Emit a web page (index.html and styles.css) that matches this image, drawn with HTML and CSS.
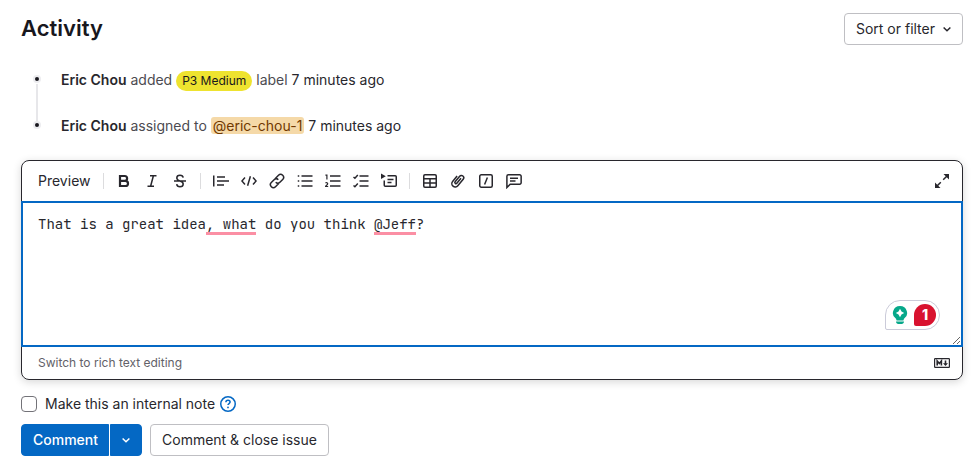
FILE: index.html
```html
<!DOCTYPE html>
<html lang="en">
<head>
<meta charset="utf-8">
<title>Activity</title>
<link rel="stylesheet" href="styles.css">
</head>
<body>
<main class="activity">
  <header class="activity-header">
    <h2 class="title">Activity</h2>
    <button class="btn sort" type="button">Sort or filter
      <svg class="chevron" viewBox="0 0 16 16" aria-hidden="true"><path d="M3.500 6 8 10.300 12.500 6"/></svg>
    </button>
  </header>

  <ul class="timeline">
    <li class="note"><span class="dot"></span><p class="note-text"><a class="author" href="#">Eric Chou</a> added <a class="label" href="#">P3 Medium</a> label <a class="time" href="#">7 minutes ago</a></p></li>
    <li class="note"><span class="dot"></span><p class="note-text"><a class="author" href="#">Eric Chou</a> assigned to <a class="mention" href="#">@eric-chou-1</a> <a class="time" href="#">7 minutes ago</a></p></li>
  </ul>

  <form class="comment-form">
    <div class="editor">
      <div class="toolbar">
        <button class="preview" type="button">Preview</button>
        <span class="divider"></span>
        <div class="tools">
          <button class="tool" type="button" aria-label="Bold"><svg viewBox="0 0 16 16"><path class="thick" d="M4 3h4.700a2.400 2.400 0 0 1 0 4.800H4zM4 7.800h5.400a2.600 2.600 0 0 1 0 5.200H4z"/></svg></button>
          <button class="tool" type="button" aria-label="Italic"><svg viewBox="0 0 16 16"><path d="M6 2.750h6.500M3.500 13.250H10M9.400 2.750l-2.800 10.500"/></svg></button>
          <button class="tool" type="button" aria-label="Strikethrough"><svg viewBox="0 0 16 16"><path d="M2 8h12M11.200 4.700C11 3.300 9.700 2.200 8 2.200S4.800 3.300 4.800 4.900c0 1.800 1.600 2.400 3.200 3.100 1.700.6 3.200 1.200 3.200 3 0 1.700-1.400 2.800-3.200 2.800s-3.100-1.100-3.300-2.600"/></svg></button>
        </div>
        <span class="divider"></span>
        <div class="tools">
          <button class="tool" type="button" aria-label="Quote"><svg viewBox="0 0 16 16"><path d="M.75 2.500v11M4 4h8M4 8h12M4 12h7"/></svg></button>
          <button class="tool" type="button" aria-label="Code"><svg viewBox="0 0 16 16"><path d="M4 4.500.9 8 4 11.500M12 4.500 15.100 8 12 11.500M9.400 3.200l-2.800 9.600"/></svg></button>
          <button class="tool" type="button" aria-label="Link"><svg viewBox="0 0 16 16"><path d="M6.300 5.500 9.500 2.300a2.970 2.970 0 0 1 4.200 4.200l-2.800 2.800a2.970 2.970 0 0 1-4.200 0M9.700 10.500l-3.200 3.200a2.970 2.970 0 0 1-4.200-4.200l2.800-2.800a2.970 2.970 0 0 1 4.200 0"/></svg></button>
          <button class="tool" type="button" aria-label="Bullet list"><svg viewBox="0 0 16 16"><path d="M4.500 3h11M4.500 8h11M4.500 13h11M.75 3h1.500M.75 8h1.500M.75 13h1.500"/></svg></button>
          <button class="tool" type="button" aria-label="Numbered list"><svg viewBox="0 0 16 16"><path d="M5 3h10.500M5 8h10.500M5 13h10.500"/><path class="thin" d="M.4 2.200h1.500V6.500M.5 10.200c.8-.9 2.300-.5 2.200.6-.1 1-1.700 1.700-2.200 2.700h2.700"/></svg></button>
          <button class="tool" type="button" aria-label="Checklist"><svg viewBox="0 0 16 16"><path d="M6.500 3h9M6.500 8h9M6.500 13h9M.5 4l1.400 1.200L4.800 2M.5 12.500l1.400 1.200 2.900-3.200"/></svg></button>
          <button class="tool" type="button" aria-label="Collapsible section"><svg viewBox="0 0 16 16"><path d="M6.500 2.750h7.750a1 1 0 0 1 1 1v8.500a1 1 0 0 1-1 1h-10a1 1 0 0 1-1-1V7.500M6.500 6.500h6M6.500 9.500h4"/><path class="fill" d="M0 .6l4.800 2.700L0 6z"/></svg></button>
        </div>
        <span class="divider"></span>
        <div class="tools">
          <button class="tool" type="button" aria-label="Table"><svg viewBox="0 0 16 16"><rect x="1.750" y="1.750" width="12.500" height="12.500" rx="1.200"/><path d="M2 5.750h12M2 10h12M8 5.750V14"/></svg></button>
          <button class="tool" type="button" aria-label="Attach a file"><svg viewBox="0 0 16 16"><path d="M11 5.200 6.800 10.200a1.100 1.100 0 0 1-1.700-1.400l4.600-5.500a2.250 2.250 0 0 1 3.500 2.900l-5.400 6.500a3.350 3.350 0 0 1-5.200-4.300l4.500-5.400"/></svg></button>
          <button class="tool" type="button" aria-label="Quick action"><svg viewBox="0 0 16 16"><rect x="1.750" y="1.750" width="12.500" height="12.500" rx="1.500"/><path d="M9.400 4.500l-2.800 7"/></svg></button>
          <button class="tool" type="button" aria-label="Insert comment template"><svg viewBox="0 0 16 16"><path d="M.9 14.500V3.250a1.500 1.500 0 0 1 1.500-1.500h11.250a1.500 1.500 0 0 1 1.500 1.500v6.500a1.500 1.500 0 0 1-1.500 1.500H4.200zM4 5.250h8M4 8h5.500"/></svg></button>
        </div>
        <button class="tool expand" type="button" aria-label="Full screen"><svg viewBox="0 0 16 16"><path d="M9.200 6.800 13 3M6.800 9.200 3 13"/><path class="fill" d="M9.500 1h5.500v5.500zM1 9.500V15h5.500z"/></svg></button>
      </div>

      <div class="writing">
        <textarea class="field" aria-label="Comment" spellcheck="false">That is a great idea, what do you think @Jeff?</textarea>
        <div class="marks" aria-hidden="true"><span class="mark mark-what"></span><span class="mark mark-name"></span></div>
        <button class="assistant" type="button" aria-label="Writing suggestions">
          <svg class="bulb" viewBox="0 0 16 20"><path class="green" d="M8 1a7 7 0 0 1 4 12.800l-.6 1.600H4.600L4 13.800A7 7 0 0 1 8 1zM4 16.600h8c0 1.300-1 2.400-2.300 2.400H6.300C5 19 4 17.900 4 16.600z"/><path class="white" d="M8 3.800l1.500 2.700L12.200 8 9.500 9.500 8 12.200 6.500 9.500 3.800 8l2.700-1.500z"/></svg>
          <span class="count">1</span>
        </button>
      </div>

      <div class="editor-footer">
        <button class="switch" type="button">Switch to rich text editing</button>
        <a class="markdown" href="#" aria-label="Markdown is supported"><svg viewBox="0 0 16 16"><rect class="thin" x=".6" y="3.600" width="14.800" height="8.800" rx=".6"/><path class="down" d="M3.200 10.500V6l2.100 2.500L7.400 6v4.500M11.500 5.500v4"/><path class="fill" d="M9 8.200h5L11.500 11z"/></svg></a>
      </div>
    </div>

    <div class="internal">
      <input class="checkbox" type="checkbox" id="internal-note">
      <label for="internal-note">Make this an internal note</label>
      <a class="help" href="#" aria-label="About internal notes"><svg viewBox="0 0 16 16"><circle cx="8" cy="8" r="7.250"/><path d="M5.900 6.200c0-1.200.9-2 2.100-2s2.100.8 2.100 1.900c0 1.400-2.100 1.500-2.100 3"/><circle class="fill" cx="8" cy="11.400" r=".9"/></svg></a>
    </div>

    <div class="actions">
      <div class="split">
        <button class="btn primary" type="button">Comment</button>
        <button class="btn primary toggle" type="button" aria-label="More comment options"><svg class="chevron" viewBox="0 0 16 16"><path d="M3.500 6 8 10.300 12.500 6"/></svg></button>
      </div>
      <button class="btn" type="button">Comment &amp; close issue</button>
    </div>
  </form>
</main>
</body>
</html>
```
FILE: styles.css
```css
* { box-sizing: border-box; }

body {
  margin: 0;
  background: #fff;
  color: #28272d;
  font: 14px/20px Inter, "Noto Sans", sans-serif;
}

button { font: inherit; color: inherit; cursor: pointer; }
a { color: inherit; text-decoration: none; }

svg {
  display: block;
  width: 16px;
  height: 16px;
  fill: none;
  stroke: currentColor;
  stroke-width: 1.5;
}
.thick { stroke-width: 2.2; }
.thin { stroke-width: 1.2; }
.fill { fill: currentColor; stroke: none; }

.activity { padding: 13px 17px 20px 21px; }

.activity-header {
  display: flex;
  align-items: flex-start;
  justify-content: space-between;
}
.title {
  margin: 0;
  color: #18171d;
  font-size: 22px;
  font-weight: 600;
  line-height: 30px;
}

.btn {
  display: flex;
  align-items: center;
  height: 32px;
  padding: 0 11px;
  border: 1px solid #bfbfc3;
  border-radius: 4px;
  background: #fff;
}
.sort { padding-right: 9px; }
.chevron { width: 12px; height: 12px; margin-left: 6px; stroke-width: 2; }

.timeline {
  position: relative;
  display: grid;
  gap: 25px;
  margin: 25px 0 24px;
  padding: 0;
  list-style: none;
}
.timeline::before {
  content: "";
  position: absolute;
  top: 14px;
  bottom: 14px;
  left: 15px;
  width: 2px;
  background: #e7e7ea;
}
.note { display: flex; align-items: flex-start; gap: 20px; padding-left: 12px; }
.dot {
  position: relative;
  width: 8px;
  height: 8px;
  margin-top: 5px;
  border: 2px solid #ececef;
  border-radius: 50%;
  background: #18171d;
}
.note-text { margin: 0; color: #4c4b51; }
.author { color: #28272d; font-weight: 600; }
.time { color: #28272d; }
.label {
  display: inline-block;
  padding: 0 6px;
  border-radius: 10px;
  background: #eee32f;
  color: #18171d;
  font-size: 12px;
}
.mention {
  padding: 0 2px;
  border-radius: 3px;
  background: #f5d9a8;
  color: #703800;
}

.editor {
  border: 1px solid #28272d;
  border-radius: 8px;
  box-shadow: 0 2px 8px #00000029;
}
.toolbar {
  display: flex;
  align-items: center;
  gap: 8px;
  height: 40px;
  padding: 0 8px 0 16px;
}
.preview { margin-right: 4px; padding: 0; border: 0; background: none; }
.divider { width: 1px; height: 16px; background: #dcdcde; }
.tools { display: flex; gap: 4px; }
.tool {
  display: grid;
  place-items: center;
  width: 24px;
  height: 24px;
  padding: 0;
  border: 0;
  background: none;
}
.expand { margin-left: auto; }

.writing { position: relative; margin: 0 -1px; }
.field, .marks { font: 14px/20px "JetBrains Mono", "DejaVu Sans Mono", monospace; }
.field {
  display: block;
  width: 100%;
  height: 146px;
  padding: 11px 15px;
  border: 2px solid #0468c4;
  outline: 0;
  background: #fff;
  color: #28272d;
  resize: vertical;
}
.marks {
  position: absolute;
  top: 31px;
  left: 17px;
  height: 3px;
  pointer-events: none;
}
.mark { position: absolute; height: 3px; background: #fb8fa4; }
.mark-what { left: 20ch; width: 6ch; }
.mark-name { left: 40ch; width: 5ch; }

.assistant {
  position: absolute;
  right: 23px;
  bottom: 17px;
  display: flex;
  align-items: center;
  gap: 6px;
  height: 30px;
  padding: 0 3px 0 6px;
  border: 1px solid #cbcbd9;
  border-radius: 15px 15px 15px 2px;
  background: #fff;
}
.bulb { height: 20px; stroke: none; }
.green { fill: #06a88a; }
.white { fill: #fff; }
.count {
  width: 22px;
  border-radius: 11px 11px 11px 2px;
  background: #d8122f;
  color: #fff;
  font-weight: 800;
  line-height: 22px;
}

.editor-footer {
  display: flex;
  align-items: center;
  justify-content: space-between;
  height: 32px;
  padding: 0 12px 0 16px;
}
.switch { padding: 0; border: 0; background: none; color: #626168; font-size: 12px; }
.down { stroke-width: 1.6; }

.internal {
  display: flex;
  align-items: center;
  margin: 14px 0 10px;
}
.checkbox {
  appearance: none;
  width: 16px;
  height: 16px;
  margin: 0 8px 0 0;
  border: 1px solid #737278;
  border-radius: 4px;
}
.checkbox:checked { background: #0468c4; }
.help { margin-left: 5px; color: #0468c4; }

.actions { display: flex; gap: 8px; }
.split { display: flex; gap: 1px; }
.primary {
  padding-right: 10px;
  border-color: #0468c4;
  border-radius: 4px 0 0 4px;
  background: #0468c4;
  color: #fff;
  font-weight: 500;
}
.toggle { padding: 0 9px; border-radius: 0 4px 4px 0; }
.toggle .chevron { margin: 0; }
```
